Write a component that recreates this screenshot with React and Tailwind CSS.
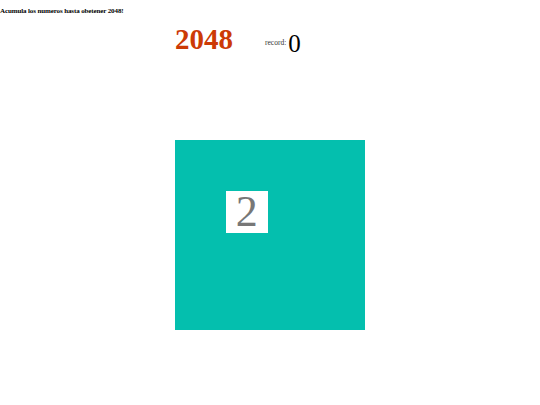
import React from 'react';

const tiles = [
  0, 0, 0, 0,
  0, 2, 0, 0,
  0, 0, 0, 0,
  0, 0, 0, 0,
];

const App = () => {
  return (
    <div className="w-[540px] h-[405px] bg-white font-['Liberation_Serif',serif] text-black">
      <p className="pt-[6px] text-[7px] font-bold leading-[10px] tracking-[-0.12px]">
        Acumula los numeros hasta obetener 2048!
      </p>

      <div className="mx-auto w-[190px]">
        {/* header */}
        <div className="flex items-end h-[38px]">
          <h1 className="text-[29px] font-bold leading-[30px] text-[#cc3a06]">2048</h1>
          <div className="ml-[32px] flex items-end mb-[-2px]">
            <span className="text-[7.5px] leading-[10px] mb-[8px] text-[#333]">record:</span>
            <span className="ml-[2px] text-[25px] leading-[25px]">0</span>
          </div>
        </div>

        {/* board */}
        <div className="mt-[86px] w-[190px] h-[190px] bg-[#04bfae] grid grid-cols-4 grid-rows-4 gap-[4.5px] p-[4.5px]">
          {tiles.map((v, i) => (
            <div
              key={i}
              className={v ? 'bg-white flex items-center justify-center text-[44px] leading-none text-[#777]' : ''}
            >
              {v ? v : null}
            </div>
          ))}
        </div>
      </div>
    </div>
  );
};

export default App;
